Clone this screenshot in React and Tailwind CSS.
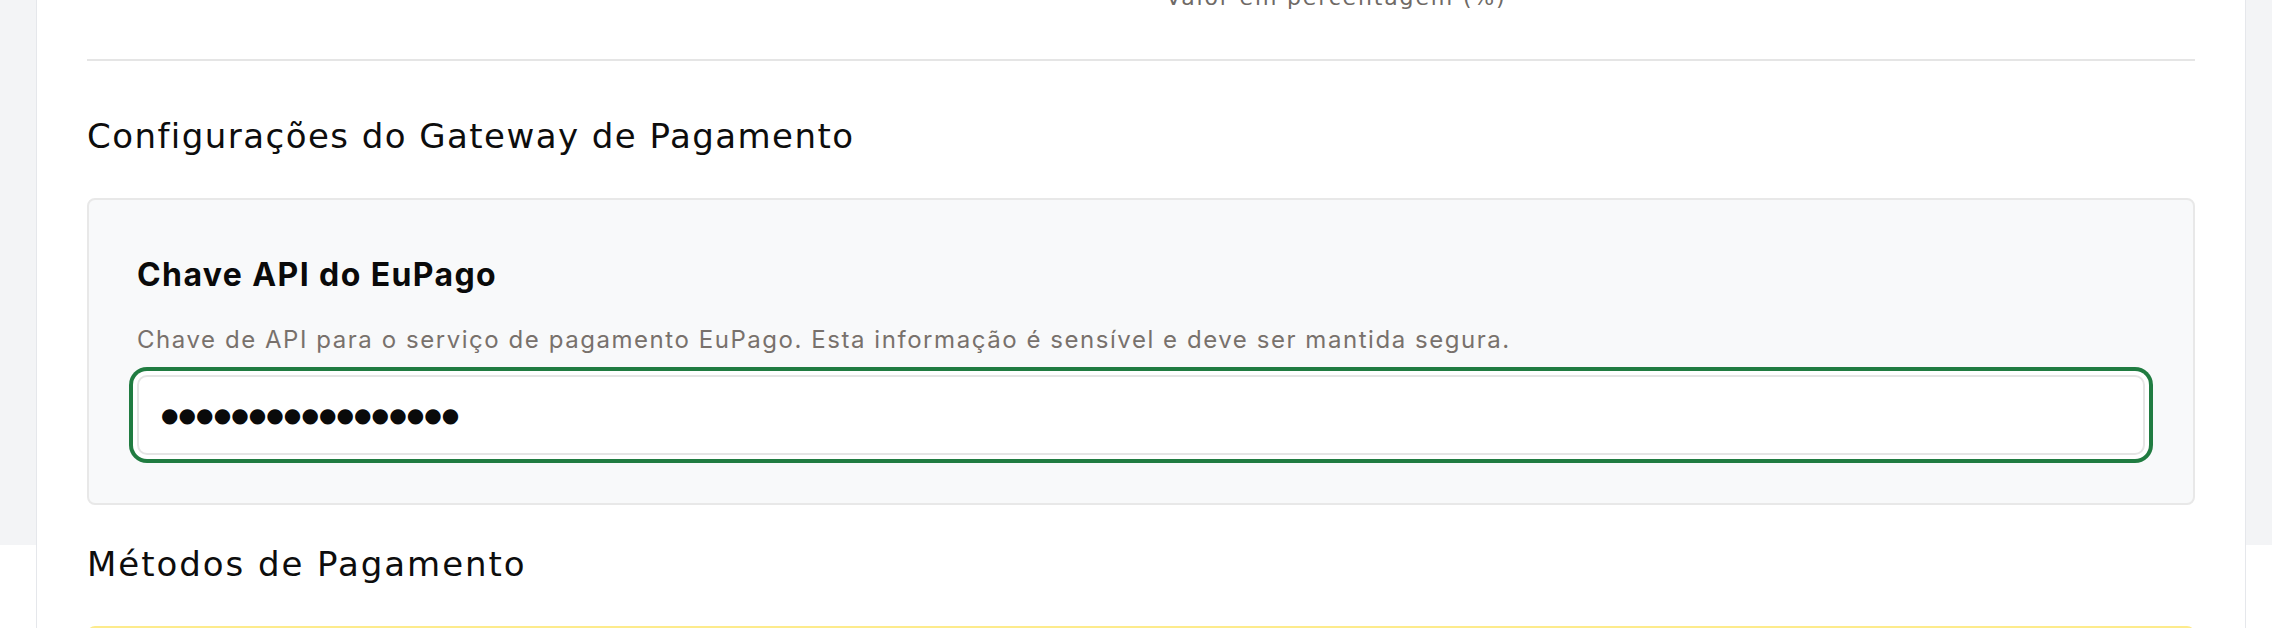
import React from "react";

const headingFont = { fontFamily: '"DejaVu Sans", "Open Sans", sans-serif' };

const settings = {
  gatewayTitle: "Configurações do Gateway de Pagamento",
  apiKey: {
    label: "Chave API do EuPago",
    help: "Chave de API para o serviço de pagamento EuPago. Esta informação é sensível e deve ser mantida segura.",
    length: 17,
  },
  methodsTitle: "Métodos de Pagamento",
};

const App = () => {
  const masked = "\u25CF".repeat(settings.apiKey.length);

  return (
    <div className="h-[628px] w-full overflow-hidden bg-[linear-gradient(to_bottom,#f3f4f6_545px,#ffffff_545px)] font-['Inter',sans-serif]">
      <div className="ml-[36px] mr-[26px] h-full border-x border-[#e5e7eb] bg-white px-[50px]">
        {/* previous section (cut off) */}
        <div className="flex h-[59px] flex-col">
          <div className="-mt-[14px] grid grid-cols-2 gap-x-[50px]">
            <div></div>
            <p
              className="text-[22px] leading-[24px] tracking-[1.85px] text-[#6f6a66]"
              style={headingFont}
            >
              Valor em percentagem (%)
            </p>
          </div>
        </div>
        <div className="h-[2px] bg-[#e5e5e5]"></div>

        {/* Gateway */}
        <h2
          className="mt-[55px] text-[34px] leading-[40px] tracking-[1.45px] text-[#0d0d0d]"
          style={headingFont}
        >
          {settings.gatewayTitle}
        </h2>

        <div className="mt-[42px] rounded-lg border-2 border-[#e8e8e8] bg-[#f8f9fa] p-12">
          <label className="mt-[9px] block text-[32px] font-bold leading-[36px] tracking-[1.4px] text-[#0a0a0a]">
            {settings.apiKey.label}
          </label>
          <p className="mt-[31px] text-[24px] leading-[32px] tracking-[1.55px] text-[#78716c]">
            {settings.apiKey.help}
          </p>
          <div className="mt-[19px] flex h-[80px] items-center rounded-[10px] border-2 border-[#e5e5e5] bg-white pl-[22px] ring-4 ring-[#207c41] ring-offset-4 ring-offset-white">
            <span className="font-['DejaVu_Sans',sans-serif] text-[20px] leading-none tracking-[0.1px] text-[#0a0a0a]">
              {masked}
            </span>
          </div>
        </div>

        {/* Methods */}
        <h2
          className="mt-[39px] text-[34px] leading-[40px] tracking-[1.95px] text-[#0d0d0d]"
          style={headingFont}
        >
          {settings.methodsTitle}
        </h2>
        <div className="mt-[42px] h-[120px] rounded-lg border-2 border-[#fdeb8c] bg-[#fffbea]"></div>
      </div>
    </div>
  );
};

export default App;
